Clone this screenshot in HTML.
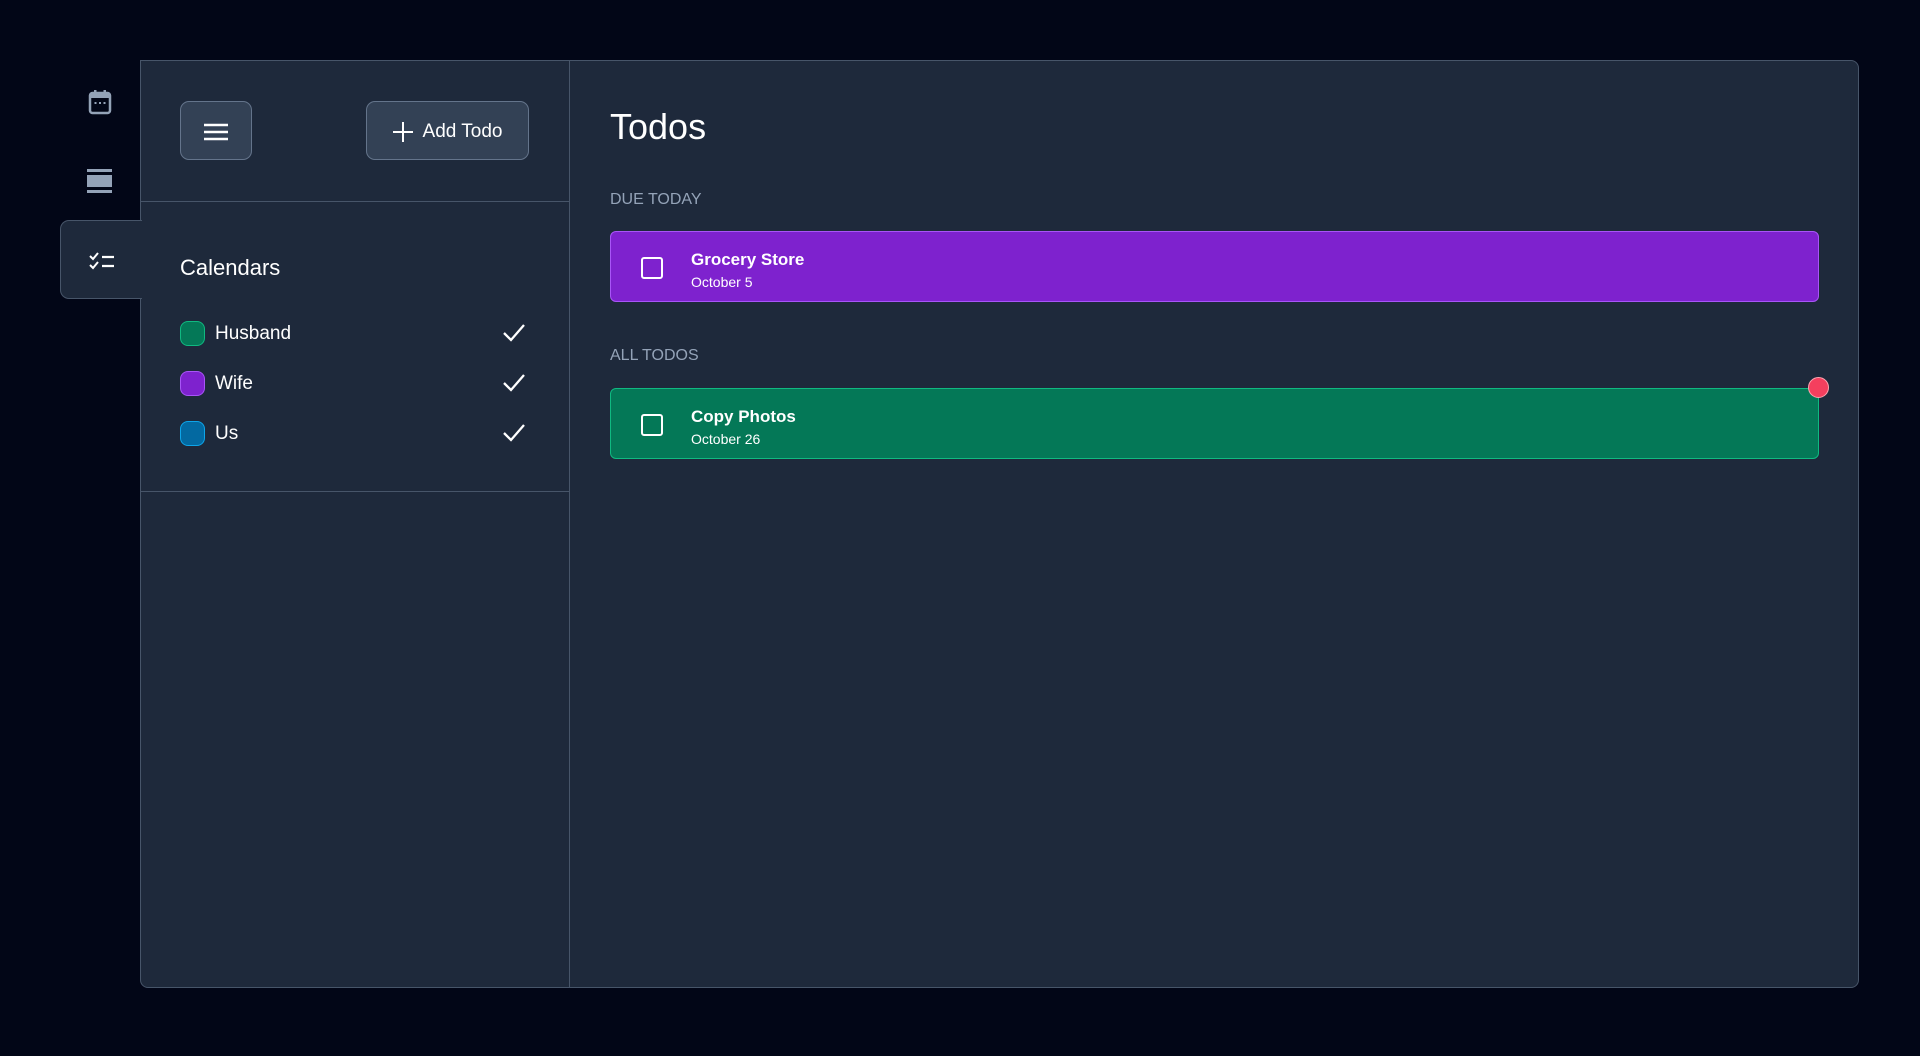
<!DOCTYPE html>
<html><head><meta charset="utf-8"><style>
*{box-sizing:border-box;margin:0;padding:0}
body{width:1920px;height:1056px;background:#020617;font-family:"Liberation Sans",sans-serif;color:#fff;position:relative;overflow:hidden}
.panel{position:absolute;left:140px;top:60px;width:1719px;height:928px;background:#1e293b;border:1px solid #475569;border-radius:8px;border-top-left-radius:0}
.tab{position:absolute;left:60px;top:220px;width:82px;height:79px;background:#1e293b;border:1px solid #475569;border-right:none;border-radius:9px 0 0 9px;z-index:2}
.vdiv{position:absolute;left:569px;top:60px;width:1px;height:928px;background:#475569}
.hdiv{position:absolute;left:140px;width:429px;height:1px;background:#475569}
.btn{position:absolute;top:101px;height:59px;background:#334155;border:1px solid #64748b;border-radius:9px;display:flex;align-items:center;justify-content:center}
.cal{position:absolute;left:180px;display:flex;align-items:center;font-size:19px}
.sw{width:25px;height:25px;border-radius:8px;margin-right:10px;border:1px solid}
.chk{position:absolute;left:502px}
.sec{position:absolute;left:610px;font-size:16px;color:#94a3b8}
.card{position:absolute;left:610px;width:1209px;height:71px;border-radius:6px;border:1px solid}
.box{position:absolute;left:30px;top:25px;width:22px;height:22px;border:2.5px solid #fff;border-radius:3px}
.t{position:absolute;left:80px;top:18px;font-weight:bold;font-size:17px}
.d{position:absolute;left:80px;top:42px;font-size:14px}
</style></head><body>
<svg style="position:absolute;left:88px;top:89px" width="24" height="26" viewBox="0 0 24 26"><rect x="2" y="4" width="20" height="20" rx="2.5" fill="none" stroke="#94a3b8" stroke-width="2.5"/><rect x="2" y="4" width="20" height="5" fill="#94a3b8"/><rect x="6" y="1" width="2.5" height="5" fill="#94a3b8"/><rect x="15.5" y="1" width="2.5" height="5" fill="#94a3b8"/><rect x="6.5" y="13" width="2" height="2" fill="#94a3b8"/><rect x="11" y="13" width="2" height="2" fill="#94a3b8"/><rect x="15.5" y="13" width="2" height="2" fill="#94a3b8"/></svg>
<svg style="position:absolute;left:87px;top:169px" width="25" height="25" viewBox="0 0 25 25"><rect x="0" y="0" width="25" height="3" fill="#94a3b8"/><rect x="0" y="6" width="25" height="12" fill="#94a3b8"/><rect x="0" y="21" width="25" height="3" fill="#94a3b8"/></svg>
<div class="panel"></div>
<div class="tab"><svg style="position:absolute;left:28px;top:31px" width="26" height="20" viewBox="0 0 26 20"><path d="M1 4l3 3 5-6M1 13l3 3 5-6" fill="none" stroke="#fff" stroke-width="2"/><path d="M13 5h12M13 14h12" stroke="#fff" stroke-width="2.2"/></svg></div>
<div class="vdiv"></div>
<div class="hdiv" style="top:201px"></div>
<div class="hdiv" style="top:491px"></div>
<div class="btn" style="left:180px;width:72px"><svg width="24" height="18" viewBox="0 0 24 18" style="margin-top:3px"><path d="M0 2h24M0 9h24M0 16h24" stroke="#fff" stroke-width="2.5"/></svg></div>
<div class="btn" style="left:366px;width:163px;font-size:19px;padding-top:3px"><svg width="20" height="20" viewBox="0 0 20 20" style="margin-right:10px"><path d="M10 0v20M0 10h20" stroke="#fff" stroke-width="2"/></svg>Add Todo</div>
<div style="position:absolute;left:180px;top:255px;font-size:22px">Calendars</div>
<div class="cal" style="top:321px"><div class="sw" style="background:#047857;border-color:#10b981"></div>Husband</div>
<div class="cal" style="top:371px"><div class="sw" style="background:#7e22ce;border-color:#a855f7"></div>Wife</div>
<div class="cal" style="top:421px"><div class="sw" style="background:#0369a1;border-color:#0ea5e9"></div>Us</div>
<svg class="chk" style="top:323px" width="24" height="20" viewBox="0 0 24 20"><path d="M2 10l7 7L22 2" fill="none" stroke="#fff" stroke-width="2.3"/></svg>
<svg class="chk" style="top:373px" width="24" height="20" viewBox="0 0 24 20"><path d="M2 10l7 7L22 2" fill="none" stroke="#fff" stroke-width="2.3"/></svg>
<svg class="chk" style="top:423px" width="24" height="20" viewBox="0 0 24 20"><path d="M2 10l7 7L22 2" fill="none" stroke="#fff" stroke-width="2.3"/></svg>
<div style="position:absolute;left:610px;top:106px;font-size:36px">Todos</div>
<div class="sec" style="top:191px">DUE TODAY</div>
<div class="card" style="top:231px;background:#7e22ce;border-color:#a855f7"><div class="box"></div><div class="t">Grocery Store</div><div class="d">October 5</div></div>
<div class="sec" style="top:347px">ALL TODOS</div>
<div class="card" style="top:388px;background:#047857;border-color:#10b981"><div class="box"></div><div class="t">Copy Photos</div><div class="d">October 26</div></div>
<div style="position:absolute;left:1808px;top:377px;width:21px;height:21px;border-radius:50%;background:#f43f5e;border:1px solid #fda4af"></div>
</body></html>
